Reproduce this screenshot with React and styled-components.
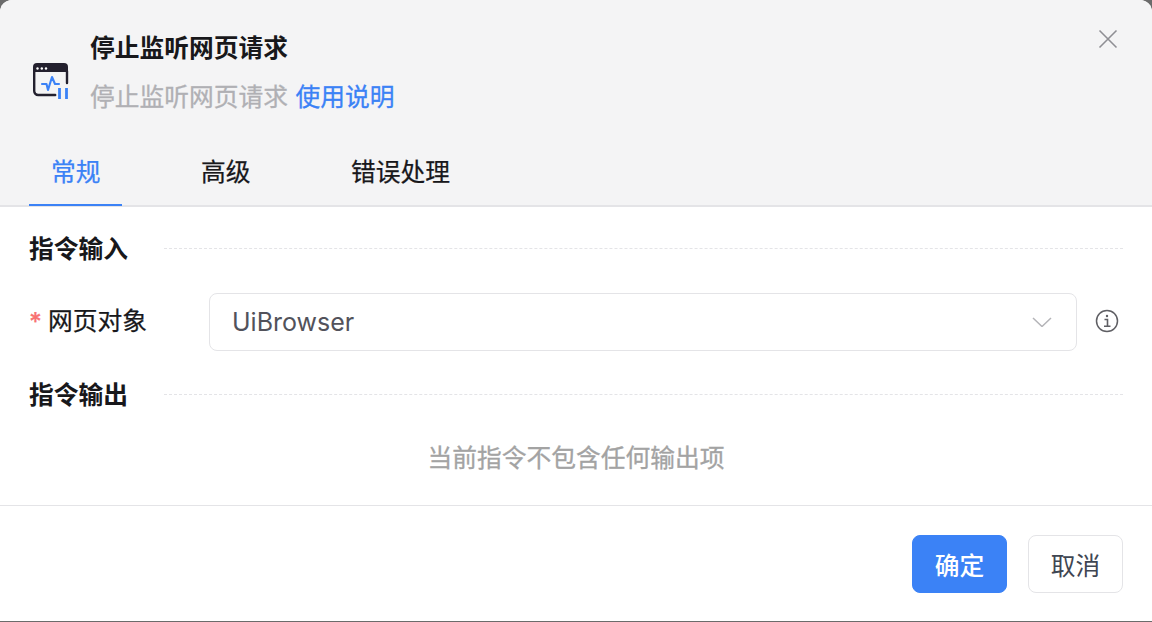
import React from 'react'
import styled, { createGlobalStyle } from 'styled-components'

const GlobalStyle = createGlobalStyle`
  html, body {
    margin: 0;
    padding: 0;
    background: #6b6b6b;
  }

  body {
    font-family: Inter, "Noto Sans CJK SC", sans-serif;
  }
`

const App = () => {
  return (
    <>
      <GlobalStyle />
      <Dialog>
        <Header>
          <CloseButton aria-label="close">
            <svg width="20" height="20" viewBox="0 0 20 20" fill="none" stroke="#8f8f94" strokeWidth="1.6">
              <path d="M1.5 1.5 18.5 18.5M18.5 1.5 1.5 18.5" />
            </svg>
          </CloseButton>

          <TitleRow>
            <CommandIcon />
            <TitleText>
              <Title>停止监听网页请求</Title>
              <Subtitle>
                停止监听网页请求<HelpLink>使用说明</HelpLink>
              </Subtitle>
            </TitleText>
          </TitleRow>

          <Tabs>
            <Tab active>常规</Tab>
            <Tab>高级</Tab>
            <Tab>错误处理</Tab>
          </Tabs>
        </Header>

        <Body>
          <Section>
            <SectionTitle>指令输入</SectionTitle>
            <SectionRule />
          </Section>

          <FormRow>
            <Label>
              <Star>*</Star>网页对象
            </Label>
            <Select>
              <span>UiBrowser</span>
              <svg width="20" height="10" viewBox="0 0 20 10" fill="none" stroke="#b4b4b8" strokeWidth="1.5">
                <path d="M1 1 10 9.5 19 1" />
              </svg>
            </Select>
            <InfoIcon />
          </FormRow>

          <Section>
            <SectionTitle>指令输出</SectionTitle>
            <SectionRule />
          </Section>

          <Empty>当前指令不包含任何输出项</Empty>
        </Body>

        <Footer>
          <Button primary>确定</Button>
          <Button>取消</Button>
        </Footer>
      </Dialog>
    </>
  )
}

const CommandIcon = () => (
  <IconSvg width="36" height="36" viewBox="0 0 36 36" fill="none">
    <path d="M4 0h27a4 4 0 0 1 4 4v5H0V4a4 4 0 0 1 4-4Z" fill="#23202e" />
    <path
      d="M34 8v12M1.200 8v20a4 4 0 0 0 4 4h17"
      stroke="#23202e"
      strokeWidth="2.400"
      strokeLinecap="round"
    />
    <circle cx="4.500" cy="5.500" r="1.200" fill="#fff" />
    <circle cx="8.800" cy="5.500" r="1.200" fill="#fff" />
    <circle cx="13" cy="5.500" r="1.200" fill="#fff" />
    <path
      d="M9 21h4.500l1.500 6 4-13 3 7h4"
      stroke="#3b82f6"
      strokeWidth="2.100"
      strokeLinecap="round"
      strokeLinejoin="round"
    />
    <path d="M26.500 25v11M33.500 25v11" stroke="#3b82f6" strokeWidth="2.800" />
  </IconSvg>
)

const InfoIcon = () => (
  <InfoSvg width="24" height="24" viewBox="0 0 24 24" fill="none" stroke="#5f5f64">
    <circle cx="12" cy="12" r="10.500" strokeWidth="1.500" />
    <circle cx="12" cy="7" r="1.200" fill="#5f5f64" stroke="none" />
    <path d="M9.500 10.500H12.500V17M9 17.300H15.500" strokeWidth="1.600" />
  </InfoSvg>
)

const Dialog = styled.div`
  background: #fff;
  border-radius: 12px 12px 0 0;
  box-sizing: border-box;
  display: flex;
  flex-direction: column;
  height: 621px;
  overflow: hidden;
  width: 1152px;
`

const Header = styled.header`
  background: #f4f4f5;
  border-bottom: 2px solid #e4e4e7;
  box-sizing: border-box;
  height: 207px;
  padding: 30px 29px 0;
  position: relative;
`

const CloseButton = styled.div`
  height: 20px;
  position: absolute;
  right: 34px;
  top: 29px;
  width: 20px;
`

const TitleRow = styled.div`
  display: flex;
  gap: 21px;
  padding-left: 4px;
`

const IconSvg = styled.svg`
  align-self: flex-end;
  margin-bottom: 16px;
`

const TitleText = styled.div`
  display: flex;
  flex-direction: column;
  gap: 13px;
`

const Title = styled.div`
  color: #18181b;
  font-size: 24.75px;
  font-weight: 700;
  line-height: 36px;
`

const Subtitle = styled.div`
  color: #b0b0b4;
  font-size: 24.75px;
  line-height: 36px;
  -webkit-text-stroke: 0.3px;
`

const HelpLink = styled.span`
  color: #3b82f6;
  margin-left: 7.500px;
`

const Tabs = styled.div`
  display: flex;
  gap: 57px;
  margin-top: 39px;
`

const Tab = styled.div`
  border-bottom: 2px solid ${({ active }) => (active ? '#3b82f6' : 'transparent')};
  color: ${({ active }) => (active ? '#3b82f6' : '#18181b')};
  font-size: 24.75px;
  line-height: 36px;
  padding: 0 21.5px 14px 22px;
  -webkit-text-stroke: 0.25px;
`

const Body = styled.main`
  display: flex;
  flex: 1;
  flex-direction: column;
  padding: 24px 29px 0;
`

const Section = styled.div`
  align-items: center;
  display: flex;
  gap: 36px;
  height: 36px;
`

const SectionTitle = styled.div`
  color: #18181b;
  font-size: 24.75px;
  font-weight: 700;
  line-height: 36px;
  white-space: nowrap;
`

const SectionRule = styled.div`
  border-top: 1px dashed #e4e4e7;
  flex: 1;
  margin-bottom: 2px;
`

const FormRow = styled.div`
  align-items: center;
  display: flex;
  height: 58px;
  margin: 26px 0 26px;
`

const Label = styled.label`
  color: #18181b;
  display: flex;
  font-size: 24.75px;
  line-height: 36px;
  margin-top: -3px;
  width: 180px;
  -webkit-text-stroke: 0.25px;
`

const Star = styled.span`
  color: #f87171;
  font-weight: 500;
  margin-right: 6px;
`

const Select = styled.div`
  align-items: center;
  border: 1px solid #e4e4e7;
  border-radius: 8px;
  box-sizing: border-box;
  color: #52525b;
  display: flex;
  flex: 1;
  font-size: 25px;
  height: 58px;
  justify-content: space-between;
  padding: 0 24px 0 22px;
`

const InfoSvg = styled.svg`
  margin: 0 4px 2px 18px;
`

const Empty = styled.div`
  color: #a3a3a3;
  font-size: 24.75px;
  line-height: 36px;
  margin-top: 27px;
  text-align: center;
  -webkit-text-stroke: 0.3px;
`

const Footer = styled.footer`
  border-top: 1px solid #e4e4e7;
  box-sizing: border-box;
  display: flex;
  gap: 21px;
  height: 116px;
  justify-content: flex-end;
  padding: 29px 29px 0;
`

const Button = styled.button`
  background: ${({ primary }) => (primary ? '#3b82f6' : '#fff')};
  border: 1px solid ${({ primary }) => (primary ? '#3b82f6' : '#e4e4e7')};
  border-radius: 8px;
  color: ${({ primary }) => (primary ? '#fff' : '#3f4652')};
  font-family: inherit;
  font-size: 24.75px;
  font-weight: ${({ primary }) => (primary ? 500 : 400)};
  height: 58px;
  padding: 0;
  width: 95px;
`

export default App
